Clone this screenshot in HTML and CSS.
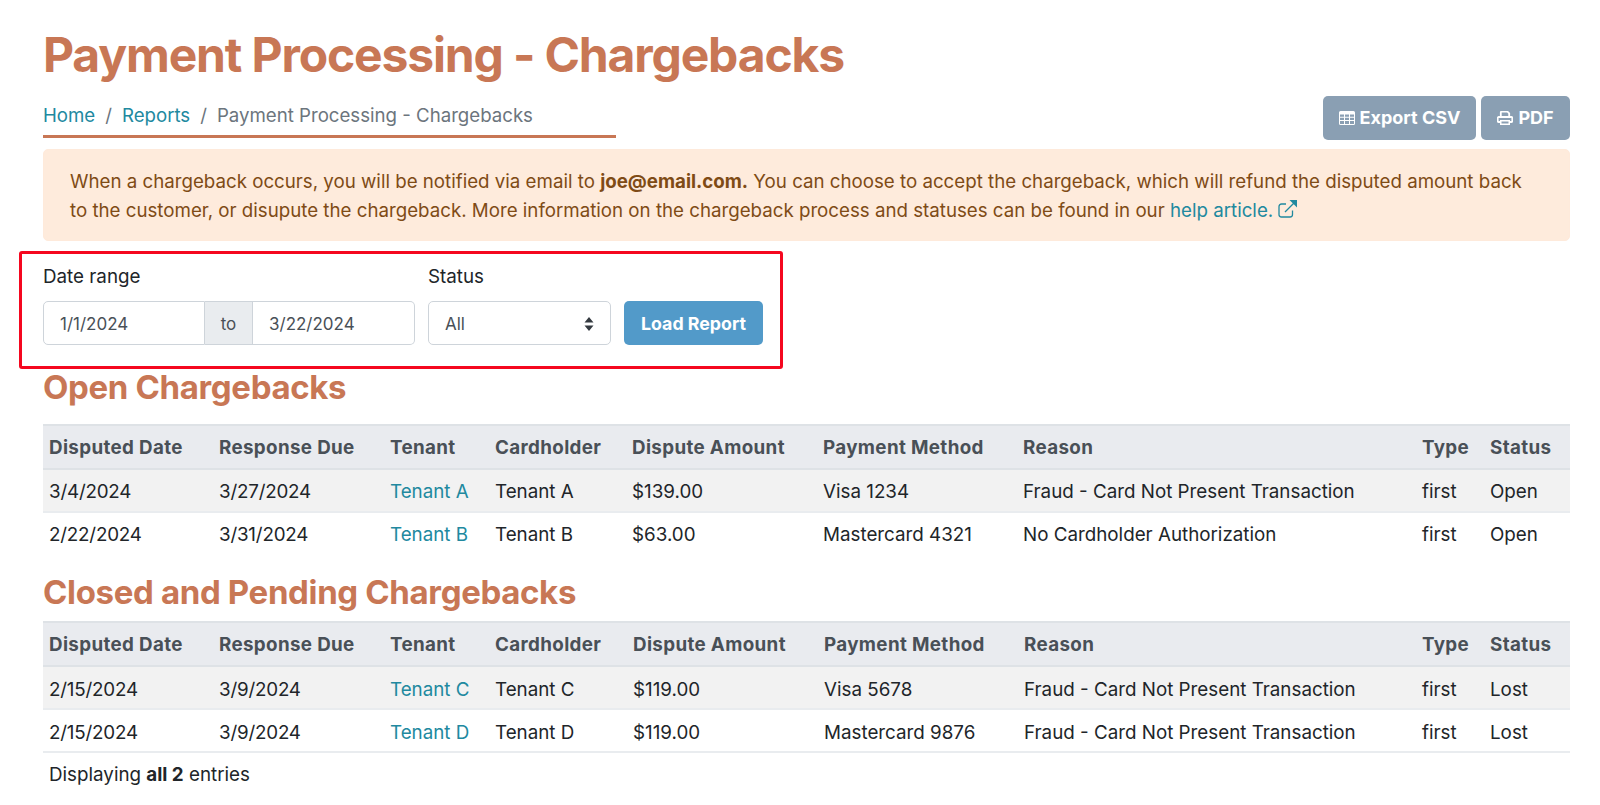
FILE: index.html
```html
<!DOCTYPE html>
<html lang="en">
<head>
<meta charset="utf-8">
<title>Payment Processing - Chargebacks</title>
<link rel="stylesheet" href="styles.css">
</head>
<body>
<main class="page">
  <h1 class="title">Payment Processing - Chargebacks</h1>
  <div class="topbar">
    <nav class="crumbs">
      <a href="#">Home</a><span class="sep">/</span><a href="#">Reports</a><span class="sep">/</span><span class="current">Payment Processing - Chargebacks</span>
    </nav>
    <div class="actions">
      <a class="btn-grey btn-csv" href="#"><svg class="ico" viewBox="0 0 16 14"><path fill="#fff" fill-rule="evenodd" d="M1.5 0h13A1.5 1.5 0 0 1 16 1.5v11a1.5 1.5 0 0 1-1.500 1.500h-13A1.500 1.500 0 0 1 0 12.500v-11A1.500 1.500 0 0 1 1.500 0zM1 3.500V5.800h4V3.500zM6 3.500V5.800h4V3.500zM11 3.500V5.800h4V3.500zM1 6.800V9h4V6.800zM6 6.800V9h4V6.800zM11 6.800V9h4V6.800zM1 10v2.500a.5.5 0 0 0 .5.5H5v-3zM6 10v3h4v-3zM11 10v3h3.500a.5.5 0 0 0 .5-.5V10z"/></svg> Export CSV</a>
      <a class="btn-grey btn-pdf" href="#"><svg class="ico" viewBox="0 0 16 14"><path fill="none" stroke="#fff" stroke-width="1.800" d="M3.800 6V1.500a.8.8 0 0 1 .8-.8h5.900l1.700 1.700V6M3.500 11H1.700a1 1 0 0 1-1-1V7a1 1 0 0 1 1-1h12.600a1 1 0 0 1 1 1v3a1 1 0 0 1-1 1h-1.800"/><path fill="#fff" d="M3 9h10v5H3zM4.500 10.500v2h7v-2z" fill-rule="evenodd"/></svg> PDF</a>
    </div>
  </div>
  <div class="alert">
    When a chargeback occurs, you will be notified via email to <strong>joe@email.com.</strong> You can choose to accept the chargeback, which will refund the disputed amount back to the customer, or disupute the chargeback. More information on the chargeback process and statuses can be found in our <a href="#">help article. <svg class="ext" viewBox="0 0 19 18"><path fill="none" stroke="currentColor" stroke-width="1.300" d="M14.500 10.500v4a2.500 2.500 0 0 1-2.500 2.500H3.500A2.500 2.500 0 0 1 1 14.500V6.500A2.500 2.500 0 0 1 3.500 4H8M7 12 17 2"/><path fill="currentColor" d="M11.500 0H19v7.500z"/></svg></a>
  </div>
  <form class="filters">
    <div class="field">
      <label class="lbl">Date range</label>
      <div class="range">
        <div class="inp inp-start">1/1/2024</div>
        <div class="addon">to</div>
        <div class="inp inp-end">3/22/2024</div>
      </div>
    </div>
    <div class="field">
      <label class="lbl">Status</label>
      <div class="select">All
        <svg class="caret" viewBox="0 0 10 14"><path fill="#343a40" d="M5 0 9.500 5.500H.5zM5 14 .5 8.500h9z"/></svg>
      </div>
    </div>
    <button class="load" type="button">Load Report</button>
    <div class="mark"></div>
  </form>

  <h2 class="sub sub-open">Open Chargebacks</h2>
  <table class="grid">
    <colgroup><col class="c1"><col class="c2"><col class="c3"><col class="c4"><col class="c5"><col class="c6"><col class="c7"><col class="c8"><col class="c9"></colgroup>
    <thead><tr><th>Disputed Date</th><th>Response Due</th><th>Tenant</th><th>Cardholder</th><th>Dispute Amount</th><th>Payment Method</th><th>Reason</th><th>Type</th><th>Status</th></tr></thead>
    <tbody>
      <tr class="odd"><td class="date">3/4/2024</td><td class="date">3/27/2024</td><td><a href="#">Tenant A</a></td><td>Tenant A</td><td>$139.00</td><td>Visa 1234</td><td>Fraud - Card Not Present Transaction</td><td>first</td><td>Open</td></tr>
      <tr class="noline"><td class="date">2/22/2024</td><td class="date">3/31/2024</td><td><a href="#">Tenant B</a></td><td>Tenant B</td><td>$63.00</td><td>Mastercard 4321</td><td>No Cardholder Authorization</td><td>first</td><td>Open</td></tr>
    </tbody>
  </table>

  <h2 class="sub sub-closed">Closed and Pending Chargebacks</h2>
  <table class="grid grid-b">
    <colgroup><col class="c1"><col class="c2"><col class="c3"><col class="c4"><col class="c5"><col class="c6"><col class="c7"><col class="c8"><col class="c9"></colgroup>
    <thead><tr><th>Disputed Date</th><th>Response Due</th><th>Tenant</th><th>Cardholder</th><th>Dispute Amount</th><th>Payment Method</th><th>Reason</th><th>Type</th><th>Status</th></tr></thead>
    <tbody>
      <tr class="odd"><td class="date">2/15/2024</td><td class="date">3/9/2024</td><td><a href="#">Tenant C</a></td><td>Tenant C</td><td>$119.00</td><td>Visa 5678</td><td>Fraud - Card Not Present Transaction</td><td>first</td><td>Lost</td></tr>
      <tr><td class="date">2/15/2024</td><td class="date">3/9/2024</td><td><a href="#">Tenant D</a></td><td>Tenant D</td><td>$119.00</td><td>Mastercard 9876</td><td>Fraud - Card Not Present Transaction</td><td>first</td><td>Lost</td></tr>
    </tbody>
  </table>
  <p class="count">Displaying <strong>all 2</strong> entries</p>
</main>
</body>
</html>
```

FILE: styles.css
```css
* { box-sizing: border-box; }
html, body { margin: 0; background: #fff; }
body { font-family: Inter, "Liberation Sans", sans-serif; font-size: 18.8px; line-height: 29.5px; color: #212529; }
a { color: #21899f; text-decoration: none; }
.page { padding: 26px 30px 0 43px; }

.title { margin: 0; font-size: 48px; letter-spacing: -1.15px; line-height: 58px; font-weight: 700; color: #c87755; }
.topbar { display: flex; justify-content: space-between; align-items: flex-start; margin-top: 12px; }
.crumbs { width: 573px; height: 43px; padding-top: 6px; border-bottom: 3px solid #c87755; margin-top: -1px; font-size: 18.65px; color: #6c757d; white-space: nowrap; }
.sep { margin: 0 10px; color: #6c757d; }
.actions { display: flex; gap: 5px; }
.btn-grey { display: flex; align-items: center; justify-content: center; gap: 5px; height: 44px; background: #8a9fb3; color: #fff; border-radius: 5px; font-size: 18px; font-weight: 700; }
.btn-csv { width: 153px; }
.btn-pdf { width: 89px; }
.ico { width: 16px; height: 14px; }

.alert { margin-top: 9px; height: 92px; padding: 17px 26px 15px; font-size: 18.72px; line-height: 29px; background: #feebdc; border: 1px solid #feeadb; border-radius: 5px; color: #7f4b16; }
.ext { width: 19px; height: 18px; vertical-align: -1px; }

.filters { position: relative; display: flex; align-items: flex-end; gap: 12px; margin-top: 21px; }
.lbl { display: block; height: 39px; line-height: 29.5px; }
.range { display: flex; height: 44px; width: 373px; }
.inp { width: 162px; padding: 0 16px; font-size: 17px; line-height: 44px; border: 1px solid #ced4da; color: #495057; }
.inp-start { border-radius: 5px 0 0 5px; }
.inp-end { border-radius: 0 5px 5px 0; border-left: 0; }
.addon { width: 48px; text-align: center; font-size: 17px; line-height: 44px; background: #e9ecef; border: 1px solid #ced4da; border-width: 1px 1px 1px 0; color: #495057; }
.select { position: relative; width: 183px; height: 44px; padding: 0 16px; font-size: 17px; line-height: 44px; border: 1px solid #ced4da; border-radius: 5px; color: #495057; }
.caret { position: absolute; right: 16px; top: 15px; width: 10px; height: 14px; }
.load { width: 139px; height: 44px; margin-left: 1px; padding: 0; border: 0; border-radius: 5px; background: #529ac9; color: #fff; font: 700 17.8px Inter, "Liberation Sans", sans-serif; }
.mark { position: absolute; left: -24px; top: -11px; width: 764px; height: 118px; border: 3px solid #f5071f; border-radius: 3px; pointer-events: none; }

.sub { margin: 0; font-size: 33px; letter-spacing: -0.35px; line-height: 40px; font-weight: 700; color: #c87755; }
.sub-open { margin-top: 22px; }
.sub-closed { margin-top: 17px; }

.grid { width: 1527px; margin-top: 17px; border-collapse: collapse; table-layout: fixed; }
.sub-closed + .grid { margin-top: 9px; }
.c1 { width: 170px; } .c2 { width: 171px; } .c3 { width: 105px; } .c4 { width: 137px; } .c5 { width: 191px; }
.c6 { width: 200px; } .c7 { width: 399px; } .c8 { width: 68px; } .c9 { width: 86px; }
.grid-b .c4 { width: 138px; } .grid-b .c7 { width: 398px; }
.grid th { height: 44px; padding: 2px 6px 0; text-align: left; font-weight: 700; letter-spacing: .35px; color: #495057; background: #e9ebef; border-top: 2px solid #dee2e6; border-bottom: 2px solid #dee2e6; white-space: nowrap; }
.grid td { height: 43px; padding: 2px 6px 0; border-bottom: 2px solid #e9ecef; white-space: nowrap; }
.grid td.date { letter-spacing: -.2px; }
.grid-b td { padding-top: 4px; }
.odd td { background: #f2f2f2; }
.noline td { border-bottom: 0; }
.count { margin: 7px 0 0 6px; }
```
